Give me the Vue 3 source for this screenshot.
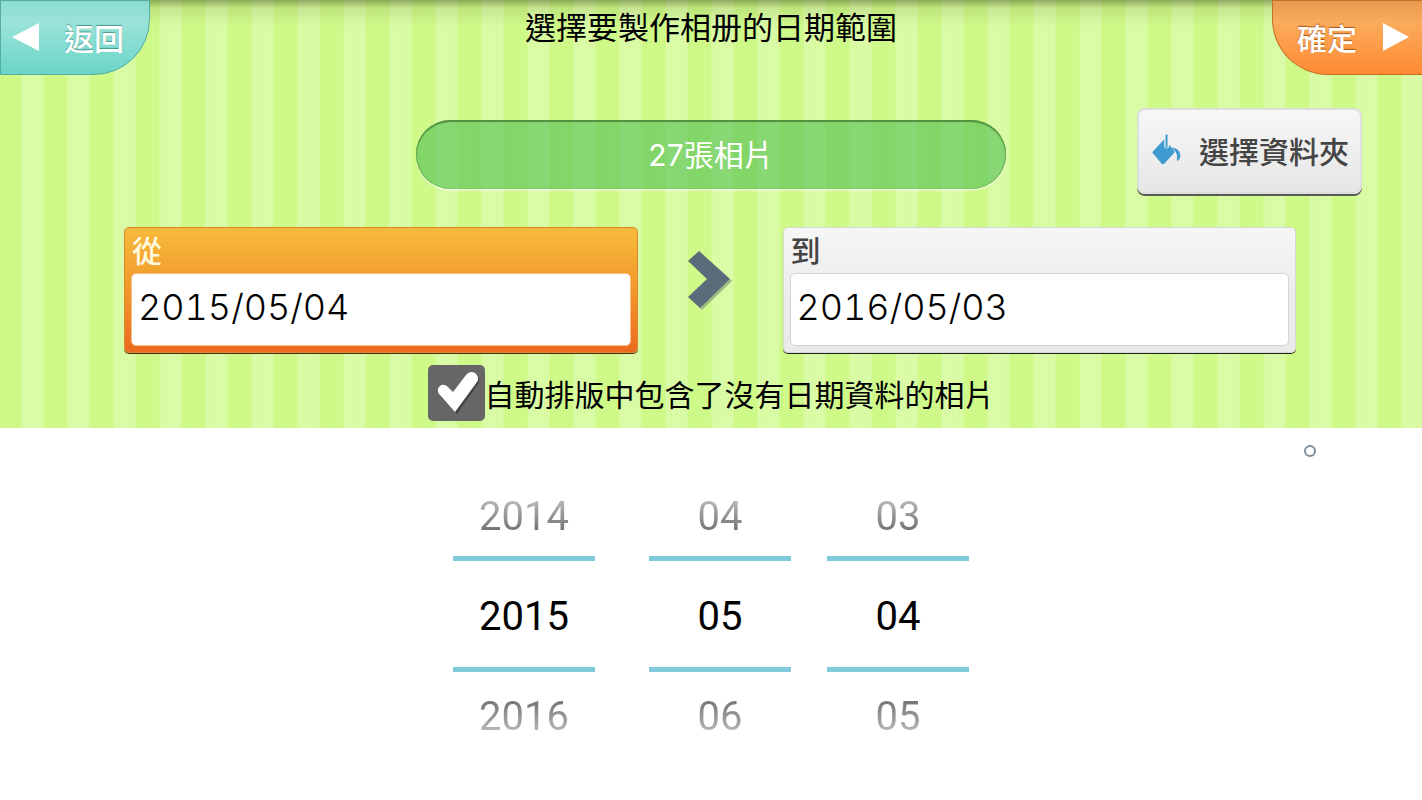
<script setup>
import { ref } from 'vue'

const from = ref('2015/05/04')
const to = ref('2016/05/03')
const includeUndated = ref(true)
const wheels = ref([
  { name: '年', prev: '2014', value: '2015', next: '2016' },
  { name: '月', prev: '04', value: '05', next: '06' },
  { name: '日', prev: '03', value: '04', next: '05' },
])
</script>

<template>
  <main class="page">
    <header class="panel">
      <div class="topbar">
        <button class="corner back" type="button">
          <svg width="28" height="28" viewBox="0 0 28 28" aria-hidden="true"><path d="M0 14 L27 0 V28 Z" fill="#fff" /></svg>
          <span>返回</span>
        </button>
        <h1 class="title">選擇要製作相册的日期範圍</h1>
        <button class="corner confirm" type="button">
          <span>確定</span>
          <svg width="26" height="28" viewBox="0 0 26 28" aria-hidden="true"><path d="M0 0 L26 14 L0 28 Z" fill="#fff" /></svg>
        </button>
      </div>

      <div class="summary">
        <p class="count">27張相片</p>
        <button class="folder" type="button">
          <svg width="30" height="32" viewBox="0 0 30 32" aria-hidden="true">
            <path d="M12.200 5.500 L0.800 17.500 Q0 18.500 1 19.500 L9.500 29.500 Q11 31 12.500 29.500 L22.500 18.500 Q23 17.500 22 16.500 L17 10.500 V13 Q15 16 12.200 13 Z" fill="#3f9ad0" />
            <path d="M13.500 0.500 H15.500 V13.500 Q14.500 14.500 13.500 13.500 Z" fill="#3f9ad0" />
            <path d="M19.500 13.500 Q28 14 28.500 22 Q28 25 25.500 27.500 Q24.500 25.500 25 23 Q25.500 18 19.500 13.500 Z" fill="#3f9ad0" />
          </svg>
          <span>選擇資料夾</span>
        </button>
      </div>

      <div class="range">
        <div class="field active">
          <label for="from">從</label>
          <input id="from" v-model="from" type="text" />
        </div>
        <svg class="arrow" width="46" height="62" viewBox="0 0 46 62" aria-hidden="true">
          <path d="M43 29 L45 31 L15 60 L12 57 Z" fill="#9dbb80" />
          <path d="M1 11 L12 1 L43 29 L13 58 L1 47 L20 29 Z" fill="#5b6b7a" />
        </svg>
        <div class="field">
          <label for="to">到</label>
          <input id="to" v-model="to" type="text" />
        </div>
      </div>

      <label class="option">
        <span class="tick">
          <input v-model="includeUndated" type="checkbox" />
          <svg v-if="includeUndated" width="57" height="56" viewBox="0 0 57 56" aria-hidden="true">
            <path d="M11 29 Q8 24 12 21 Q16 18 20 22 L25 27 L38 10 Q42 5 47 8 Q52 12 49 17 L28 47 Z" fill="#444" transform="translate(1 2)" />
            <path d="M11 29 Q8 24 12 21 Q16 18 20 22 L25 27 L38 10 Q42 5 47 8 Q52 12 49 17 L27 47 Z" fill="#fff" />
          </svg>
        </span>
        <span>自動排版中包含了沒有日期資料的相片</span>
      </label>
    </header>

    <section class="picker">
      <span class="dot"></span>
      <div class="wheels">
        <div v-for="wheel in wheels" :key="wheel.name" class="wheel">
          <button class="prev" type="button">{{ wheel.prev }}</button>
          <input v-model="wheel.value" type="text" :aria-label="wheel.name" />
          <button class="next" type="button">{{ wheel.next }}</button>
        </div>
      </div>
    </section>
  </main>
</template>

<style>
body {
  background: #fff;
}
</style>

<style scoped>
* {
  box-sizing: border-box;
}

.page {
  font-family: Inter, "Noto Sans CJK TC", sans-serif;
  font-weight: 400;
  font-size: 30px;
  color: #000;
}

button,
input {
  font: inherit;
  color: inherit;
  border: 0;
  padding: 0;
  margin: 0;
  background: none;
}

.panel {
  padding-bottom: 7px;
  background:
    linear-gradient(rgba(70, 90, 30, 0.5), rgba(100, 120, 50, 0.16) 8px, rgba(100, 120, 50, 0) 26px),
    repeating-linear-gradient(rgba(255, 255, 255, 0.06) 0 1px, transparent 1px 4px),
    repeating-linear-gradient(90deg, rgba(255, 255, 255, 0.06) 0 1px, transparent 1px 3px),
    linear-gradient(90deg, #cdf985 0 23px, #d8fba2 24px 45px, #cdf985 46px) center top / 46px 100%;
}

.topbar {
  display: grid;
  grid-template-columns: 1fr auto 1fr;
  align-items: start;
}

.title {
  margin: 0;
  padding-top: 5px;
  font-size: 31px;
  line-height: 46px;
  font-weight: 400;
}

.corner {
  display: flex;
  align-items: center;
  height: 75px;
  width: 150px;
  padding-bottom: 1px;
  color: #fff;
  font-weight: 500;
}

.back {
  gap: 24px;
  padding-left: 11px;
  border: 1px solid #55aca0;
  border-radius: 0 0 56px 0;
  background: linear-gradient(#8ddcd0, #9ae3d8 30%, #6ad5c8);
  text-shadow: 0 -1px 1px #48968e;
}

.confirm {
  justify-self: end;
  justify-content: flex-end;
  gap: 26px;
  padding-right: 13px;
  border: 1px solid #c76d24;
  border-right-width: 0;
  border-radius: 0 0 0 56px;
  background: linear-gradient(#e69a50, #fbab5c 30%, #ff8a33);
  text-shadow: 0 -1px 1px #a85618;
}

.summary {
  display: grid;
  grid-template-columns: 1fr 590px 1fr;
  align-items: start;
  padding-top: 33px;
}

.count {
  grid-column: 2;
  margin: 12px 0 0;
  height: 69px;
  line-height: 70px;
  text-align: center;
  color: #fff;
  border-radius: 35px;
  background: rgba(67, 184, 76, 0.54);
  box-shadow:
    inset 0 2px 1px #52913f,
    inset 1px 0 1px #6fae58,
    inset -1px 0 1px #6fae58,
    0 2px 0 rgba(255, 255, 255, 0.55);
}

.folder {
  justify-self: end;
  display: flex;
  align-items: center;
  gap: 17px;
  height: 86px;
  margin-right: 60px;
  padding: 0 11px 3px 13px;
  border: 2px solid #dcdfdc;
  border-radius: 8px;
  background: linear-gradient(#f7f7f7, #e6e6e6);
  box-shadow: 0 2px 0 #585858;
  color: #444;
  font-weight: 500;
}

.range {
  display: grid;
  grid-template-columns: 1fr 145px 1fr;
  align-items: center;
  justify-items: center;
  padding: 33px 126px 0 124px;
}

.arrow {
  display: block;
  margin-bottom: 18px;
}

.field {
  display: flex;
  flex-direction: column;
  width: 100%;
  padding: 0 6px 6px;
  border: 1px solid #d4d8d0;
  border-radius: 5px;
  background: linear-gradient(#f6f6f6, #eee 40%, #e9e9e9);
  box-shadow: 0 1px 0 #222;
  color: #444;
}

.field label {
  height: 45px;
  padding-left: 1px;
  line-height: 47px;
  font-weight: 500;
}

.field input {
  width: 100%;
  height: 73px;
  padding: 0 6px 6px;
  border: 1px solid #d3d3d3;
  border-radius: 5px;
  background: #fff;
  color: #000;
  font-size: 36px;
  font-weight: 300;
  font-variant-numeric: tabular-nums;
}

.field.active {
  border-color: #d98a2c;
  background: linear-gradient(#f7ba3d, #f29b2c 45%, #ec6a1f);
  box-shadow: 0 1px 0 #4d2a08;
  color: #fffbe0;
}

.field.active input {
  border-color: #f3c08a;
}

.option {
  display: flex;
  align-items: center;
  width: fit-content;
  margin: 12px auto 0;
}

.tick {
  display: grid;
}

.tick > * {
  grid-area: 1 / 1;
}

.tick input {
  appearance: none;
  width: 57px;
  height: 56px;
  border-radius: 5px;
  background: #666;
}

.tick svg {
  pointer-events: none;
}

.picker {
  display: flex;
  flex-direction: column;
}

.dot {
  align-self: flex-end;
  width: 12px;
  height: 12px;
  margin: 17px 106px 19px 0;
  border: 2px solid #7d8f98;
  border-radius: 50%;
}

.wheels {
  display: flex;
  justify-content: center;
  gap: 36px;
}

.wheel {
  display: flex;
  flex-direction: column;
  width: 142px;
  font-family: Roboto, sans-serif;
  font-size: 40px;
  font-weight: 400;
}

.wheel:first-child {
  margin-right: 18px;
}

.wheel input {
  width: 100%;
  height: 116px;
  padding-top: 4px;
  text-align: center;
  border: solid #80cadb;
  border-width: 5px 0;
}

.prev,
.next {
  height: 80px;
  color: transparent;
  background-clip: text;
}

.prev {
  background-image: linear-gradient(#ccc 20%, #666 75%);
}

.next {
  height: 88px;
  background-image: linear-gradient(#666 25%, #ccc 78%);
}
</style>
